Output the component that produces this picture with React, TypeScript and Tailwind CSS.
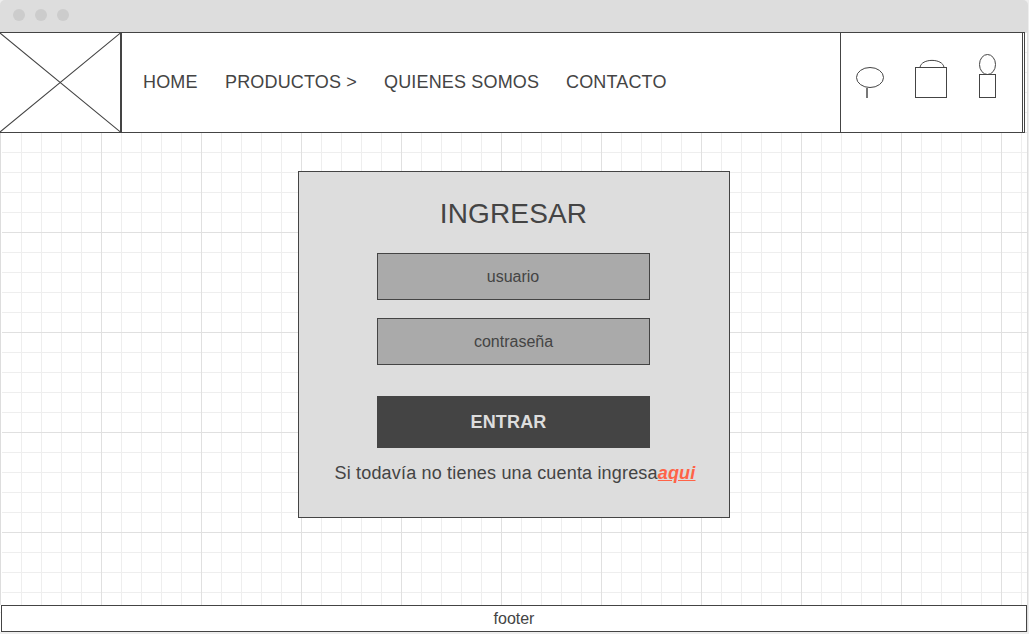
const navItems = [
  { label: "HOME", width: "w-[82px]" },
  { label: "PRODUCTOS >", width: "w-[159px]" },
  { label: "QUIENES SOMOS", width: "w-[182px]" },
  { label: "CONTACTO", width: "w-[110px]" },
];

function TitleBar() {
  return (
    <div className="flex h-8 w-[1028px] shrink-0 items-start gap-[10px] rounded-t-[5px] bg-[#ddd] pt-[9px] pl-[13px]">
      <span className="size-3 rounded-full bg-[#ccc]" />
      <span className="size-3 rounded-full bg-[#ccc]" />
      <span className="size-3 rounded-full bg-[#ccc]" />
    </div>
  );
}

function Header() {
  return (
    <header className="flex h-[101px] w-[1025px] shrink-0 border-y border-r border-[#444] bg-white">
      <div className="w-[122px] shrink-0 border-r-2 border-[#444]">
        <svg width="120" height="99" viewBox="0 0 120 99" fill="none" stroke="#444" strokeWidth="1.1">
          <path d="M0 0L120.5 99M120.5 0L0 99" />
        </svg>
      </div>
      <nav className="flex grow items-center pb-[2px] pl-[21px] text-lg tracking-[0.16px] text-[#444]">
        {navItems.map((item) => (
          <a key={item.label} className={item.width + " whitespace-nowrap"}>
            {item.label}
          </a>
        ))}
      </nav>
      <div className="mr-px w-[183px] shrink-0 border-x border-[#444]">
        <svg width="181" height="99" viewBox="841 33 181 99" fill="none" stroke="#444">
          <ellipse cx="870" cy="77.5" rx="13.5" ry="10" />
          <path d="M867 88V98" stroke="#777" strokeWidth="2" />
          <rect x="915.5" y="67.5" width="31" height="30" />
          <path d="M920 67.5C921 58 943 58 944 67.5" />
          <ellipse cx="987.5" cy="64.5" rx="8" ry="10" />
          <rect x="979.5" y="74.5" width="16" height="23" />
        </svg>
      </div>
    </header>
  );
}

function LoginCard() {
  return (
    <form className="flex h-[347px] w-[432px] flex-col items-center border border-[#444] bg-[#ddd] text-[#444]">
      <h1 className="mt-[21px] h-[42px] text-[28px] leading-[42px] tracking-[0.15px]">INGRESAR</h1>
      <div className="mt-[18px] flex h-[47px] w-[273px] items-center justify-center border border-[#444] bg-[#aaa] pr-px text-base">
        usuario
      </div>
      <div className="mt-[18px] flex h-[47px] w-[273px] items-center justify-center border border-[#444] bg-[#aaa] text-base">
        contraseña
      </div>
      <button
        type="button"
        className="mt-[31px] h-[52px] w-[273px] bg-[#444] pr-[10px] text-lg font-bold tracking-[0.15px] text-[#ddd]"
      >
        ENTRAR
      </button>
      <p className="mt-[11px] ml-[3px] text-lg leading-7 tracking-[0.18px] whitespace-nowrap">
        Si todavía no tienes una cuenta ingresa
        <a className="font-bold text-[#ff6347] italic underline">aqui</a>
      </p>
    </form>
  );
}

export default function App() {
  return (
    <div className="flex h-[634px] w-[1029px] flex-col overflow-hidden bg-[#eee] font-['Liberation_Sans',Arial,sans-serif]">
      <TitleBar />
      <div className="flex h-[600px] w-[1028px] shrink-0 flex-col border-r border-[#ddd] bg-white bg-[linear-gradient(to_right,#e0e0e0_1px,transparent_1px),linear-gradient(to_bottom,#e0e0e0_1px,transparent_1px),linear-gradient(to_right,#eee_1px,transparent_1px),linear-gradient(to_bottom,#eee_1px,transparent_1px)] bg-[size:100px_100px,100px_100px,20px_20px,20px_20px] bg-[position:1px_0px,1px_0px,1px_0px,1px_0px]">
        <Header />
        <main className="flex h-[472px] border-l border-[#ddd]">
          <div className="w-px bg-white" />
          <div className="flex grow justify-center pt-[38px] pr-[2px]">
            <LoginCard />
          </div>
        </main>
        <footer className="ml-px flex h-[27px] w-[1026px] items-center justify-center border border-[#444] bg-white text-base text-[#444]">
          footer
        </footer>
        <div className="grow bg-[#eee]" />
      </div>
    </div>
  );
}
